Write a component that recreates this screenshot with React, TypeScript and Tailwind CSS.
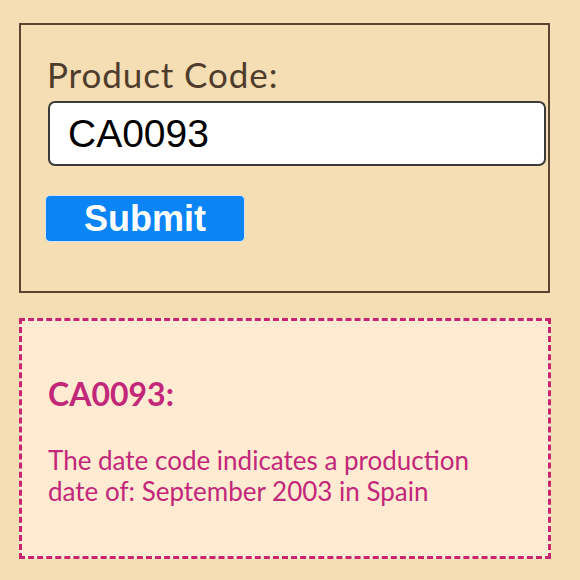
export default function App() {
  return (
    <div className="min-h-[580px] w-[580px] bg-[#f5deb3] pt-[23px] pl-[19px] pb-[20px]">
      <div className="w-[531px] h-[270px] border-2 border-[#5c4433] pt-[29px] pl-[26px] pr-[1px]">
        <label className="block text-[35px] leading-[40px] tracking-[0.9px] text-[#4f3c2c] font-['Lato',sans-serif]">
          Product Code:
        </label>
        <input
          type="text"
          defaultValue="CA0093"
          className="mt-[7px] ml-[1px] block w-[498px] h-[65px] bg-white border-2 border-[#3a3a3a] rounded-[7px] px-[18px] text-[39px] text-black font-['Liberation_Sans',Arial,sans-serif] outline-none"
        />
        <button className="mt-[29px] block w-[200px] h-[47px] bg-[#0b84f6] border border-[#cfe3f5] rounded-[5px] text-white font-bold text-[36px] leading-[40px] font-['Liberation_Sans',Arial,sans-serif] -ml-[2px]">
          Submit
        </button>
      </div>
      <div className="mt-[25px] w-[532px] h-[241px] border-[3px] border-dashed border-[#c8246f] bg-[#feebd1] pt-[55px] pl-[26px] font-['Lato',sans-serif] text-[#c3277a]">
        <div className="font-bold text-[32px] leading-[36px]">CA0093:</div>
        <p className="mt-[33px] text-[26px] leading-[31px] w-[470px]">
          The date code indicates a production date of: September 2003 in Spain
        </p>
      </div>
    </div>
  )
}
